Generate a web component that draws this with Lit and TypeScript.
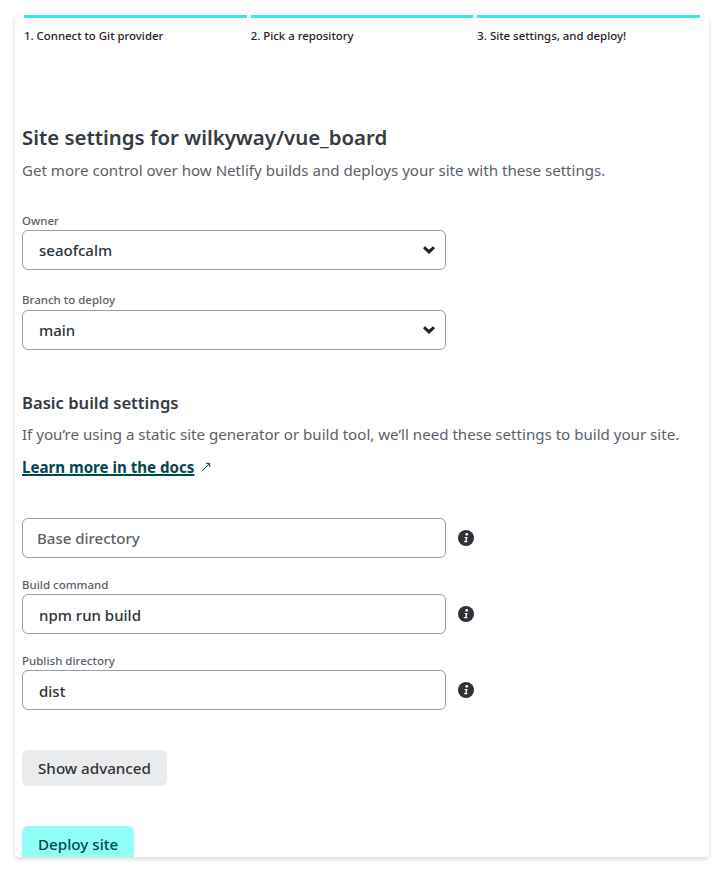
import {LitElement, html, css} from 'lit';
import {customElement} from 'lit/decorators.js';

const steps = [
  '1. Connect to Git provider',
  '2. Pick a repository',
  '3. Site settings, and deploy!',
];

const chevron = html`<svg class="chevron" viewBox="0 0 12 8" width="12" height="8">
  <path d="M0 2.2 2 .2 6 3.8 10 .2 12 2.2 6 8z" fill="#1c1e22"></path>
</svg>`;

const info = html`<svg class="info" viewBox="0 0 16 16" width="16" height="16">
  <circle cx="8" cy="8" r="8" fill="#2e3238"></circle>
  <circle cx="8.7" cy="4.3" r="1.35" fill="#fff"></circle>
  <path d="M6.4 7h3.1L8.6 11.1h.9l-.2 1.1H6.1l.2-1.1h.9l.6-3h-1z" fill="#fff"></path>
</svg>`;

@customElement('app-root')
export class AppRoot extends LitElement {
  static styles = css`
    :host {
      display: block;
      font-family: 'Noto Sans', 'Open Sans', sans-serif;
      color: #2e3238;
    }

    .page {
      padding: 15px 15px 15px 15px;
      background: #fff;
    }

    .card {
      box-sizing: border-box;
      height: 842px;
      overflow: hidden;
      background: #fff;
      border-radius: 4px;
      box-shadow: 0 2px 5px rgba(0, 0, 0, 0.16);
      padding: 0 9px 0 7px;
    }

    .steps {
      display: grid;
      grid-template-columns: repeat(3, 1fr);
      gap: 4px;
      margin-left: 2px;
    }

    .step {
      border-top: 3px solid #38eae4;
      padding-top: 10px;
      font-size: 11.4px;
      line-height: 16px;
      font-weight: 500;
      color: #1f2227;
    }

    h1 {
      margin: 79px 0 0;
      font-size: 20.4px;
      line-height: 28px;
      font-weight: 600;
      color: #353a42;
    }

    .lead {
      margin: 7px 0 0;
      font-size: 15.1px;
      line-height: 24px;
      color: #5a5f69;
    }

    .label {
      display: block;
      font-size: 11.5px;
      line-height: 16px;
      font-weight: 500;
      color: #5a5f69;
    }

    .owner {
      margin-top: 31px;
    }

    .owner .box {
      margin-top: 1px;
    }

    .branch {
      margin-top: 22px;
    }

    .box {
      box-sizing: border-box;
      display: flex;
      align-items: center;
      justify-content: space-between;
      width: 424px;
      height: 40px;
      margin-top: 2px;
      padding: 0 10px 0 16px;
      border: 1px solid #929fb0;
      border-radius: 6px;
      font-size: 15px;
      font-weight: 500;
      color: #2e3238;
    }

    h2 {
      margin: 41px 0 0;
      font-size: 16.6px;
      line-height: 24px;
      font-weight: 600;
      color: #353a42;
    }

    .hint {
      margin: 7px 0 0;
      font-size: 15.1px;
      line-height: 24px;
      color: #5a5f69;
    }

    .docs {
      display: flex;
      align-items: center;
      gap: 7px;
      margin-top: 9px;
      font-size: 15.1px;
      line-height: 24px;
      font-weight: 700;
      color: #01494d;
    }

    .docs a {
      color: inherit;
      text-decoration: underline;
      text-decoration-thickness: 2px;
      text-underline-offset: 1px;
    }

    .fields {
      margin-top: 38px;
    }

    .field {
      margin-top: 19px;
    }

    .field:first-child {
      margin-top: 0;
    }

    .row {
      display: flex;
      align-items: center;
      gap: 12px;
    }

    .field .row .box {
      margin-top: 1px;
    }

    .field .label + .row .box {
      padding-top: 2px;
    }

    .placeholder {
      padding-left: 14px !important;
      color: #5a5f69;
    }

    button {
      display: block;
      border: none;
      border-radius: 6px;
      font: inherit;
      font-size: 15.2px;
      font-weight: 500;
      height: 36px;
      padding: 0 16px;
    }

    .advanced {
      margin-top: 40px;
      background: #e9ebed;
      color: #2e3238;
    }

    .deploy {
      margin-top: 40px;
      height: 40px;
      background: #8ffff7;
      color: #01494d;
      padding-bottom: 4px;
    }
  `;

  render() {
    return html`
      <div class="page">
        <div class="card">
          <div class="steps">
            ${steps.map((s) => html`<div class="step">${s}</div>`)}
          </div>

          <h1>Site settings for wilkyway/vue_board</h1>
          <p class="lead">
            Get more control over how Netlify builds and deploys your site with
            these settings.
          </p>

          <div class="owner">
            <span class="label">Owner</span>
            <div class="box">seaofcalm ${chevron}</div>
          </div>
          <div class="branch">
            <span class="label">Branch to deploy</span>
            <div class="box">main ${chevron}</div>
          </div>

          <h2>Basic build settings</h2>
          <p class="hint">
            If you’re using a static site generator or build tool, we’ll need
            these settings to build your site.
          </p>
          <div class="docs">
            <a href="#">Learn more in the docs</a>
            <svg viewBox="0 0 10 10" width="10" height="10">
              <path d="M1 9 8.5 1.5M5 1.3h3.7V5" fill="none" stroke="#01494d" stroke-width="1"></path>
            </svg>
          </div>

          <div class="fields">
            <div class="field">
              <div class="row">
                <div class="box placeholder">Base directory</div>
                ${info}
              </div>
            </div>
            <div class="field">
              <span class="label">Build command</span>
              <div class="row">
                <div class="box">npm run build</div>
                ${info}
              </div>
            </div>
            <div class="field">
              <span class="label">Publish directory</span>
              <div class="row">
                <div class="box">dist</div>
                ${info}
              </div>
            </div>
          </div>

          <button class="advanced">Show advanced</button>
          <button class="deploy">Deploy site</button>
        </div>
      </div>
    `;
  }
}
